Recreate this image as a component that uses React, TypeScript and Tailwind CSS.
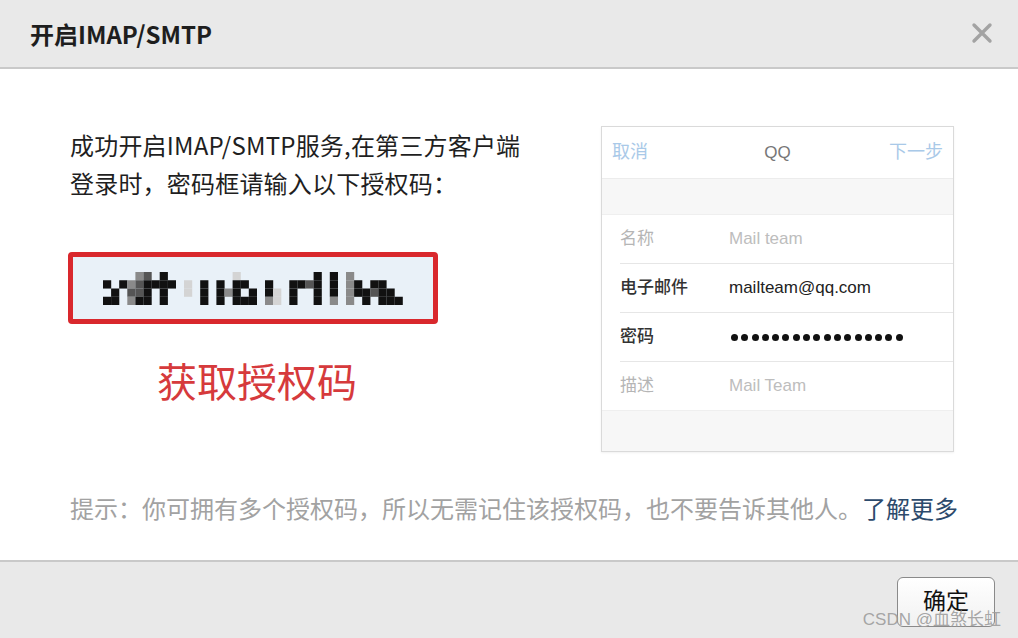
import { Fragment } from "react";

const CJK = '"Noto Sans CJK SC", "Noto Sans", sans-serif';
const UI = '"Liberation Sans", "Noto Sans CJK SC", sans-serif';

// blurred/pixelated auth code, drawn as a mosaic
const mosaic = [
  "....gG.#." + "..." + "....l.." + "." + ".." + "." + "...#.#" + "." + "g......",
  "#.#gG####" + ".l." + "#.#.##." + "." + "#." + "." + "##G#.#" + "." + "g#.##..",
  ".#.GG#.#." + ".l." + "#.#g#.#" + "." + "#l" + "." + "#..#.#" + "." + "g##G##.",
  "##.g##.#." + "..." + "#.#.###" + "." + "gl" + "." + "#..#.g" + "." + "g.#.###",
];
const shade: Record<string, string> = { "#": "#111", G: "#555", g: "#8a8a8a", l: "#d4d4d4" };

function Mosaic() {
  return (
    <svg width="300" height="33" viewBox="0 0 300 33">
      {mosaic.map((row, r) =>
        row.split("").map((c, i) =>
          c === "." ? null : (
            <rect key={`${r}-${i}`} x={i * 8.1} y={r * 8.25} width="8.2" height="8.3" fill={shade[c]} />
          )
        )
      )}
    </svg>
  );
}

const rows = [
  { label: "名称", value: "Mail team", dim: true },
  { label: "电子邮件", value: "mailteam@qq.com", dim: false },
  { label: "密码", value: "dots", dim: false },
  { label: "描述", value: "Mail Team", dim: true },
];

function PhoneMock() {
  return (
    <div
      className="w-[353px] h-[326px] border border-[#dadada] bg-white flex flex-col shadow-[0_1px_2px_rgba(0,0,0,0.06)]"
      style={{ fontFamily: UI }}
    >
      <div className="h-[52px] flex items-center justify-between px-[10px] border-b border-[#ececec] text-[18px]">
        <span className="text-[#a9c9e8]">取消</span>
        <span className="text-[#777] text-[17px] pl-[18px]">QQ</span>
        <span className="text-[#a9c9e8]">下一步</span>
      </div>
      <div className="h-[36px] bg-[#f7f7f7] border-b border-[#efefef]" />
      <div className="flex flex-col">
        {rows.map((row, i) => (
          <Fragment key={row.label}>
            <div className="h-[48px] flex items-center pl-[18px] text-[17px]">
              <span
                className={`w-[109px] ${row.dim ? "text-[#b5b5b5]" : "text-[#333] font-medium"}`}
              >
                {row.label}
              </span>
              {row.value === "dots" ? (
                <span className="flex gap-[3.3px] pl-[2px]">
                  {Array.from({ length: 17 }).map((_, d) => (
                    <span key={d} className="w-[7px] h-[7px] rounded-full bg-[#111]" />
                  ))}
                </span>
              ) : (
                <span className={row.dim ? "text-[#bdbdbd]" : "text-[#222]"}>{row.value}</span>
              )}
            </div>
            {i < rows.length - 1 && <div className="ml-[18px] h-px bg-[#e6e6e6]" />}
          </Fragment>
        ))}
      </div>
      <div className="flex-1 bg-[#f7f7f7] border-t border-[#efefef]" />
    </div>
  );
}

export default function App() {
  return (
    <div className="relative w-[1018px] h-[638px] bg-white flex flex-col overflow-hidden" style={{ fontFamily: CJK }}>
      {/* header */}
      <div className="h-[69px] shrink-0 bg-[#e9e9e9] border-b-2 border-[#c9c9c9] flex items-center justify-between pl-[30px] pr-[25px]">
        <h1 className="text-[24px] font-bold text-[#1e1e1e]">开启IMAP/SMTP</h1>
        <svg width="22" height="22" viewBox="0 0 22 22" className="mt-[-2px]">
          <path d="M3 3 L19 19 M19 3 L3 19" stroke="#a3a3a3" strokeWidth="3.4" strokeLinecap="round" />
        </svg>
      </div>

      {/* body */}
      <div className="flex-1 flex flex-col pt-[57px] pl-[68px]">
        <div className="flex">
          <div className="w-[533px] flex flex-col">
            <p className="pl-[2px] text-[24px] leading-[38px] text-[#1f1f1f] tracking-[0.2px]">
              成功开启IMAP/SMTP服务,在第三方客户端
              <br />
              登录时，密码框请输入以下授权码：
            </p>
            <div className="mt-[50px] w-[370px] h-[72px] rounded-[4px] border-[5px] border-[#d9282d] bg-[#e9f1f8] flex items-center justify-center">
              <Mosaic />
            </div>
            <div className="w-[378px] mt-[36px] text-center text-[40px] leading-[40px] text-[#d63a3c]">获取授权码</div>
          </div>
          <PhoneMock />
        </div>
        <p className="mt-[37px] pl-[2px] text-[24px] leading-[38px] text-[#a2a2a2]">
          提示：你可拥有多个授权码，所以无需记住该授权码，也不要告诉其他人。
          <span className="text-[#2c4a6c]">了解更多</span>
        </p>
      </div>

      {/* footer */}
      <div className="h-[78px] shrink-0 bg-[#e9e9e9] border-t-2 border-[#c9c9c9] flex justify-end items-start pt-[15px] pr-[23px]">
        <button className="w-[98px] h-[50px] pb-[6px] rounded-[6px] border border-[#8a8a8a] bg-gradient-to-b from-white to-[#f1f1f1] text-[23px] text-[#111] leading-none">
          确定
        </button>
      </div>

      <span
        className="absolute right-[17px] bottom-[10px] text-[17px] text-[#9c9c9c]/90 leading-none"
        style={{ fontFamily: UI }}
      >
        CSDN @血煞长虹
      </span>
    </div>
  );
}
